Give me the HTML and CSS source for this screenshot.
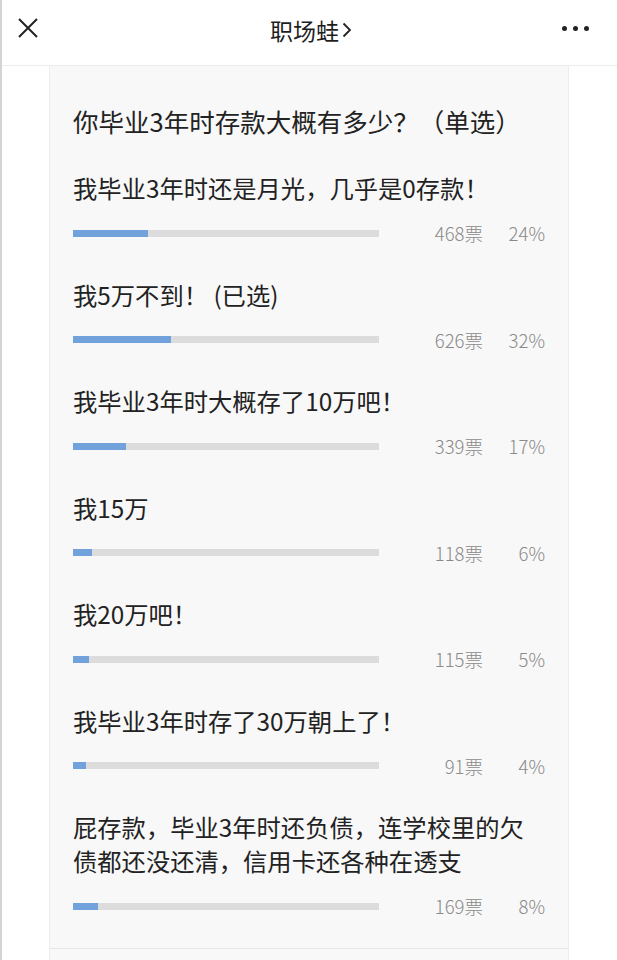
FILE: index.html
```html
<!DOCTYPE html>
<html lang="zh-CN">
<head>
  <meta charset="UTF-8" />
  <meta name="viewport" content="width=device-width, initial-scale=1.0"/>
  <title>职场蛙</title>
  <link rel="stylesheet" href="styles.css">
</head>
<body>
  <div class="page">
    <div class="topbar">
      <svg class="close" width="20" height="20" viewBox="0 0 20 20">
        <path d="M1 1 L19 19 M19 1 L1 19" stroke="#222" stroke-width="2" fill="none"/>
      </svg>
      <div class="title">职场蛙<svg class="chev" width="10" height="16" viewBox="0 0 10 16">
        <polyline points="1.5,1.5 8,8 1.5,14.5" stroke="#222" stroke-width="1.8" fill="none"/>
      </svg></div>
      <div class="more"><i></i><i></i><i></i></div>
    </div>

    <div class="vote">
      <h2>你毕业3年时存款大概有多少？（单选）</h2>

      <div class="option">
        <div class="text">我毕业3年时还是月光，几乎是0存款！</div>
        <div class="result">
          <div class="track"><div class="fill" style="width: 24.5%"></div></div>
          <span class="count">468票</span>
          <span class="pct">24%</span>
        </div>
      </div>

      <div class="option">
        <div class="text">我5万不到！ (已选)</div>
        <div class="result">
          <div class="track"><div class="fill" style="width: 32%"></div></div>
          <span class="count">626票</span>
          <span class="pct">32%</span>
        </div>
      </div>

      <div class="option">
        <div class="text">我毕业3年时大概存了10万吧！</div>
        <div class="result">
          <div class="track"><div class="fill" style="width: 17.3%"></div></div>
          <span class="count">339票</span>
          <span class="pct">17%</span>
        </div>
      </div>

      <div class="option">
        <div class="text">我15万</div>
        <div class="result">
          <div class="track"><div class="fill" style="width: 6.2%"></div></div>
          <span class="count">118票</span>
          <span class="pct">6%</span>
        </div>
      </div>

      <div class="option">
        <div class="text">我20万吧！</div>
        <div class="result">
          <div class="track"><div class="fill" style="width: 5.2%"></div></div>
          <span class="count">115票</span>
          <span class="pct">5%</span>
        </div>
      </div>

      <div class="option">
        <div class="text">我毕业3年时存了30万朝上了！</div>
        <div class="result">
          <div class="track"><div class="fill" style="width: 4.2%"></div></div>
          <span class="count">91票</span>
          <span class="pct">4%</span>
        </div>
      </div>

      <div class="option">
        <div class="text">屁存款，毕业3年时还负债，连学校里的欠债都还没还清，信用卡还各种在透支</div>
        <div class="result">
          <div class="track"><div class="fill" style="width: 8.3%"></div></div>
          <span class="count">169票</span>
          <span class="pct">8%</span>
        </div>
      </div>

      <div class="divider"></div>
    </div>
  </div>
</body>
</html>
```

FILE: styles.css
```css
* {
  box-sizing: border-box;
}
body {
  margin: 0;
  padding: 0;
  background: #fff;
  font-family: "Noto Sans CJK SC", "Noto Sans", sans-serif;
  color: #222;
}
.page {
  height: 960px;
  overflow: hidden;
  border-left: 2px solid #d4d4d4;
}

/* top bar */
.topbar {
  height: 66px;
  display: flex;
  align-items: center;
  justify-content: space-between;
  padding: 0 28px 0 16px;
  border-bottom: 1px solid #ececec;
}
.close { display: block; margin-top: -9px; }
.title {
  display: flex;
  align-items: center;
  font-size: 23px;
  line-height: 30px;
  margin-top: -6px;
  margin-left: 22px;
  color: #1e1e1e;
}
.chev { display: block; margin-left: 3px; margin-top: 1px; }
.more {
  display: flex;
  gap: 6px;
  margin-top: -8px;
}
.more i {
  display: block;
  width: 5px;
  height: 5px;
  border-radius: 50%;
  background: #222;
}

/* vote card */
.vote {
  margin: 0 48px 0 47px;
  height: 900px;
  background: #f8f8f8;
  border-left: 1px solid #ededed;
  border-right: 1px solid #ededed;
  padding: 38px 23px 0 23px;
}
h2 {
  margin: 0 0 33px;
  font-size: 25.5px;
  font-weight: normal;
  line-height: 34px;
  color: #222;
}
.option { margin-bottom: 32.5px; }
.option .text {
  font-size: 24.3px;
  line-height: 34px;
  padding-right: 10px;
  color: #222;
}
.result {
  display: flex;
  align-items: center;
  height: 24px;
  margin-top: 16px;
}
.track {
  width: 306px;
  height: 7px;
  background: #dcdcdc;
}
.fill {
  height: 100%;
  background: #72a2dc;
}
.count, .pct {
  font-size: 18.5px;
  font-weight: 300;
  color: #8a8a8a;
  text-align: right;
}
.count { width: 104px; }
.pct { width: 62px; }
.divider {
  border-top: 1px solid #e6e6e6;
  margin: 0 -23px;
  position: relative;
  top: -3px;
}
```
